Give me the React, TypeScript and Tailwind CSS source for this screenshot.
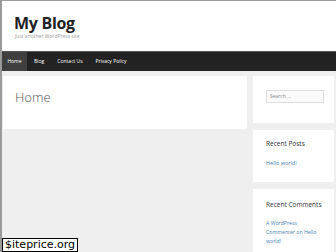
import React from "react";

export default function App() {
  const font = { fontFamily: '"Open Sans", "Noto Sans", sans-serif' };
  return (
    <div className="relative w-[336px] h-[252px] overflow-hidden bg-[#efefef] border-t border-l-2 border-[#9a9a9a]" style={font}>
      <div className="bg-white h-[50px] pl-[12px] pt-[12px]">
        <div className="text-[16px] font-bold leading-[20px] text-[#222] tracking-[-0.3px]">My Blog</div>
        <div className="text-[5px] leading-[7px] text-[#999] mt-[0px] pl-[1px]">Just another WordPress site</div>
      </div>
      <div className="bg-[#222] h-[20px] flex items-stretch text-[5px] text-white border-t border-[#555]">
        <div className="bg-[#3f3f3f] w-[25px] flex items-center justify-center">Home</div>
        <div className="w-[24px] flex items-center justify-center">Blog</div>
        <div className="w-[38px] flex items-center justify-center">Contact Us</div>
        <div className="w-[44px] flex items-center justify-center">Privacy Policy</div>
      </div>
      <div className="flex gap-[6px] pt-[5px] pl-[1px] pr-[2px]">
        <div className="w-[244px] h-[53px] bg-white pl-[12px] pt-[14px] shrink-0">
          <div className="text-[13px] leading-[15px] font-light text-[#555]">Home</div>
        </div>
        <div className="flex-1 flex flex-col gap-[7px]">
          <div className="bg-white h-[47px] pl-[13px] pt-[14px]">
            <div className="w-[58px] h-[13px] border border-[#ddd] bg-[#fafafa] text-[5px] text-[#888] pl-[3px] flex items-center">Search …</div>
          </div>
          <div className="bg-white h-[52px] pl-[13px] pt-[10px]">
            <div className="text-[6.5px] text-[#333] leading-[8px]">Recent Posts</div>
            <div className="text-[5.5px] text-[#4a7fae] mt-[11px]">Hello world!</div>
          </div>
          <div className="bg-white h-[70px] pl-[13px] pt-[12px]">
            <div className="text-[6.5px] text-[#333] leading-[8px]">Recent Comments</div>
            <div className="text-[5.2px] text-[#4a7fae] mt-[10px] leading-[9px] w-[62px]">A WordPress<br />Commenter on Hello<br />world!</div>
          </div>
        </div>
      </div>
      <div className="absolute left-0 bottom-0 bg-white border border-black px-[2px] text-[11px] leading-[12px] text-black" style={{ fontFamily: '"DejaVu Sans", sans-serif' }}>$iteprice.org</div>
    </div>
  );
}
